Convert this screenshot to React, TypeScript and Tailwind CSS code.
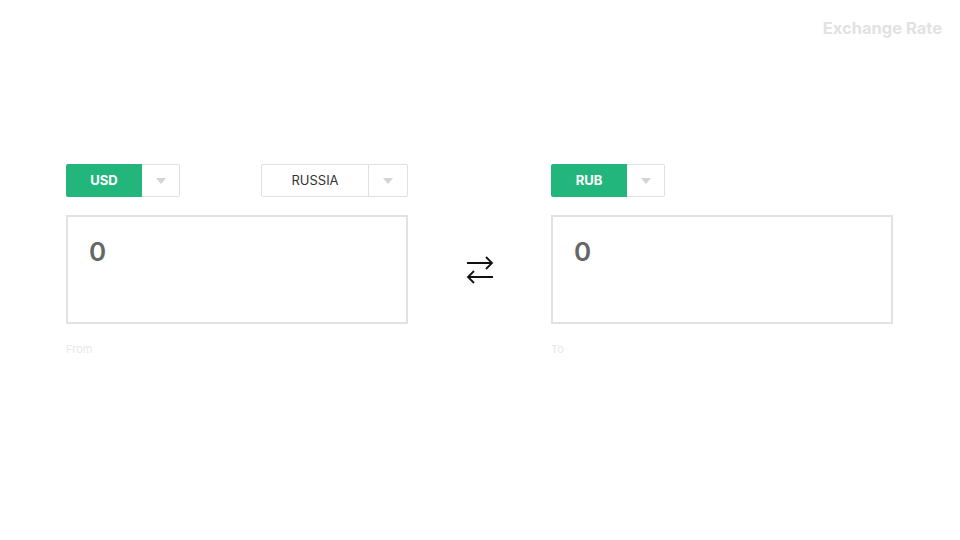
import React from "react";

const Caret: React.FC = () => (
  <svg width="10" height="6" viewBox="0 0 10 6" aria-hidden="true">
    <path d="M0 0 L10 0 L5 6 Z" fill="#d4d4d4" />
  </svg>
);

const CurrencyPicker: React.FC<{ code: string; region?: string }> = ({ code, region }) => (
  <div className="flex items-center justify-between">
    <div className="flex h-[33px]">
      <button className="w-[76px] h-full bg-[#22b67c] text-white text-[13px] font-bold rounded-l-[2px]">
        {code}
      </button>
      <button className="w-[38px] h-full border border-l-0 border-[#e0e0e0] flex items-center justify-center rounded-r-[2px]">
        <Caret />
      </button>
    </div>
    {region && (
      <div className="flex h-[33px] border border-[#e0e0e0] rounded-[2px]">
        <span className="w-[106px] flex items-center justify-center text-[13px] text-[#333]">{region}</span>
        <span className="w-[39px] border-l border-[#e0e0e0] flex items-center justify-center">
          <Caret />
        </span>
      </div>
    )}
  </div>
);

const AmountBox: React.FC<{ label: string; value: string }> = ({ label, value }) => (
  <div>
    <div className="mt-[18px] h-[109px] border-2 border-[#e2e2e2] pl-[21px] pt-[15px]">
      <span className="text-[26px] font-semibold text-[#666]">{value}</span>
    </div>
    <p className="mt-[17px] text-[11px] text-[#e8e8e8]">{label}</p>
  </div>
);

export default function App() {
  return (
    <div className="w-[960px] h-[540px] bg-white font-['Inter',sans-serif]">
      <header className="flex justify-end pr-[18px] pt-[16px] h-[140px]">
        <h1 className="text-[16.5px] font-bold text-[#e2e2e2]">Exchange Rate</h1>
      </header>

      <main className="flex pl-[66px] pt-[24px]">
        <section className="w-[342px]">
          <CurrencyPicker code="USD" region="RUSSIA" />
          <AmountBox label="From" value="0" />
        </section>

        <div className="w-[143px] flex justify-center pt-[91px]">
          <svg width="28" height="30" viewBox="0 0 28 30" fill="none" stroke="#111" strokeWidth="1.8" aria-hidden="true">
            <path d="M1 8 H26 M20 2 L26 8 L20 14" />
            <path d="M27 22 H2 M8 16 L2 22 L8 28" />
          </svg>
        </div>

        <section className="w-[342px]">
          <CurrencyPicker code="RUB" />
          <AmountBox label="To" value="0" />
        </section>
      </main>
    </div>
  );
}
